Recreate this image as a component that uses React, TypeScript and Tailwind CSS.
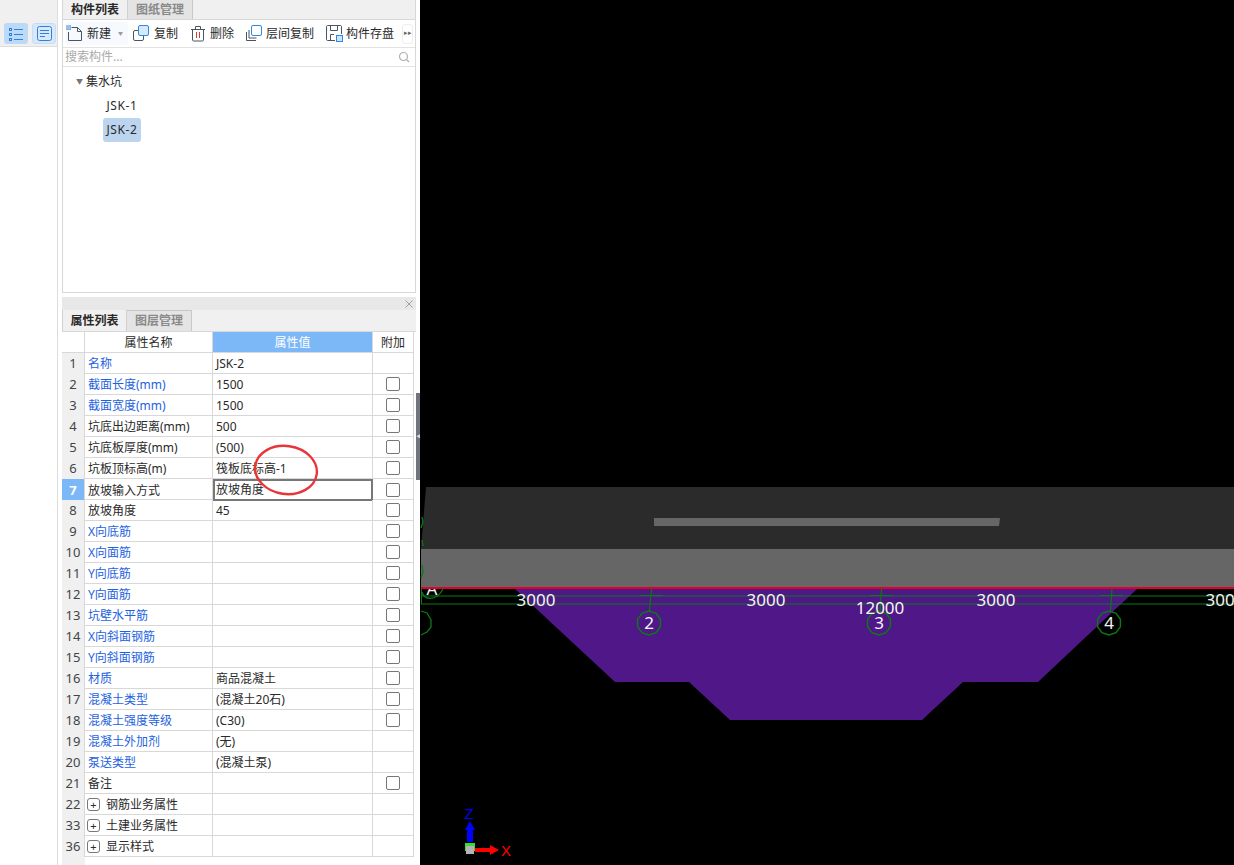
import React from 'react';

type Row = {
  no: number;
  name: string;
  value?: string;
  blue?: boolean;
  check?: boolean;
  group?: boolean;
  active?: boolean;
};

const rows: Row[] = [
  { no: 1, name: '名称', value: 'JSK-2', blue: true },
  { no: 2, name: '截面长度(mm)', value: '1500', blue: true, check: true },
  { no: 3, name: '截面宽度(mm)', value: '1500', blue: true, check: true },
  { no: 4, name: '坑底出边距离(mm)', value: '500', check: true },
  { no: 5, name: '坑底板厚度(mm)', value: '(500)', check: true },
  { no: 6, name: '坑板顶标高(m)', value: '筏板底标高-1', check: true },
  { no: 7, name: '放坡输入方式', value: '放坡角度', check: true, active: true },
  { no: 8, name: '放坡角度', value: '45', check: true },
  { no: 9, name: 'X向底筋', blue: true, check: true },
  { no: 10, name: 'X向面筋', blue: true, check: true },
  { no: 11, name: 'Y向底筋', blue: true, check: true },
  { no: 12, name: 'Y向面筋', blue: true, check: true },
  { no: 13, name: '坑壁水平筋', blue: true, check: true },
  { no: 14, name: 'X向斜面钢筋', blue: true, check: true },
  { no: 15, name: 'Y向斜面钢筋', blue: true, check: true },
  { no: 16, name: '材质', value: '商品混凝土', blue: true, check: true },
  { no: 17, name: '混凝土类型', value: '(混凝土20石)', blue: true, check: true },
  { no: 18, name: '混凝土强度等级', value: '(C30)', blue: true, check: true },
  { no: 19, name: '混凝土外加剂', value: '(无)', blue: true },
  { no: 20, name: '泵送类型', value: '(混凝土泵)', blue: true },
  { no: 21, name: '备注', check: true },
  { no: 22, name: '钢筋业务属性', group: true },
  { no: 33, name: '土建业务属性', group: true },
  { no: 36, name: '显示样式', group: true },
];

const NewIcon = () => (
  <svg width="17" height="17" viewBox="0 0 17 17" fill="none">
    <path d="M5.5 2.5H11.5L15.5 6.5V15.5H2.5V7" stroke="#4a5563" />
    <path d="M11.5 2.5V6.5H15.5" stroke="#4a5563" />
    <rect x="0" y="0" width="5" height="5" fill="#6a9fe6" />
    <path d="M1 0V5M3 0V5M0 1H5M0 3H5" stroke="#cfe0f6" strokeWidth="0.6" />
  </svg>
);

const CopyIcon = () => (
  <svg width="17" height="17" viewBox="0 0 17 17" fill="none">
    <rect x="0.5" y="5.5" width="10" height="10" rx="1.5" stroke="#4a5563" fill="#fff" />
    <rect x="5.5" y="0.5" width="10" height="10" rx="1.5" stroke="#2f88e8" fill="#d6e9fb" />
  </svg>
);

const TrashIcon = () => (
  <svg width="16" height="17" viewBox="0 0 16 17" fill="none">
    <path d="M1 4.5H15M5.5 4.5V1.5H10.5V4.5" stroke="#4a5563" />
    <path d="M2.5 4.5V15C2.5 15.5 3 16 3.5 16H12.5C13 16 13.5 15.5 13.5 15V4.5" stroke="#4a5563" />
    <path d="M6.5 7V13M9.5 7V13" stroke="#e0392f" />
  </svg>
);

const FloorCopyIcon = () => (
  <svg width="17" height="17" viewBox="0 0 17 17" fill="none">
    <path d="M0.5 7V15.5H10" stroke="#4a5563" />
    <path d="M3 5V13H10.5" stroke="#4a5563" />
    <rect x="5.5" y="0.5" width="10" height="10" rx="1.5" stroke="#2f88e8" fill="#fff" />
  </svg>
);

const SaveIcon = () => (
  <svg width="17" height="17" viewBox="0 0 17 17" fill="none">
    <path d="M9 15.5H1.5C1 15.5 0.5 15 0.5 14.5V1.5C0.5 1 1 0.5 1.5 0.5H14.5C15 0.5 15.5 1 15.5 1.5V9" stroke="#4a5563" />
    <path d="M4.5 0.5V5.5H11.5V0.5M4.5 15V9.5H8" stroke="#4a5563" />
    <rect x="10.5" y="10.5" width="6" height="6" fill="#cfe4fa" stroke="#2f88e8" />
  </svg>
);

const ToolButton = ({ icon, label, gap = 'gap-1' }: { icon: React.ReactNode; label: string; gap?: string }) => (
  <div className={`flex shrink-0 items-center whitespace-nowrap ${gap} text-[12px] text-[#2a2a2a]`}>
    {icon}
    <span className="pt-px">{label}</span>
  </div>
);

const Octagon = ({ cx, cy, r = 12 }: { cx: number; cy: number; r?: number }) => {
  const pts = Array.from({ length: 10 }, (_, i) => {
    const a = (Math.PI * 2 * i) / 10 + Math.PI / 2;
    return `${cx + r * Math.cos(a)},${cy + r * Math.sin(a)}`;
  }).join(' ');
  return <polygon points={pts} fill="none" stroke="#0a7a14" strokeWidth="1.4" />;
};

const Viewport = () => (
  <svg width="814" height="865" viewBox="420 0 814 865" className="block">
    <polygon points="515,589 1137,589 1038,682 963,682 922,720 730,720 689,682 615,682" fill="#4f1787" />
    <polygon points="426,487 1234,487 1234,549 421,549" fill="#2b2b2b" />
    <polygon points="654,518 1000,518 999,526 654,526" fill="#666666" />
    <rect x="421" y="549" width="813" height="38" fill="#666666" />
    <rect x="421" y="587" width="813" height="2" fill="#e0002a" />

    <clipPath id="axis-a">
      <rect x="421" y="589" width="30" height="20" />
    </clipPath>
    <text x="432" y="595" fill="#f4f4f4" fontFamily='"Noto Sans", sans-serif' fontSize="17" textAnchor="middle" clipPath="url(#axis-a)">A</text>

    <path d="M421 596H1234M421 604H1234" stroke="#0a7a14" strokeWidth="1.2" />
    <path d="M651.5 589L649.5 611M881.5 589L880 611M1112 589L1110.5 611" stroke="#0a7a14" strokeWidth="1.2" />
    <path d="M640 595.5H663M870 595.5H893M1100 595.5H1123" stroke="#0a7a14" strokeWidth="1" />
    <path d="M421.5 589V604" stroke="#0a7a14" strokeWidth="1" />
    <path d="M422 592C424 600 436 602 443 589" fill="none" stroke="#0a7a14" strokeWidth="1.3" />
    <path d="M421 611L427 613L431 620L431 627L427 632L421 635" fill="none" stroke="#0a7a14" strokeWidth="1.3" />
    <path d="M422 517L423 522L421 528M422 540L423 546M422 565L423 572L421 578" fill="none" stroke="#0a7a14" strokeWidth="1.3" />
    <Octagon cx={649} cy={623} />
    <Octagon cx={879} cy={623} />
    <Octagon cx={1109} cy={623} />

    <g fill="#f4f4f4" fontFamily='"Noto Sans", sans-serif' fontSize="17" textAnchor="middle">
      <text x="536" y="606">3000</text>
      <text x="766" y="606">3000</text>
      <text x="996" y="606">3000</text>
      <text x="1225" y="606">3000</text>
      <text x="880" y="614">12000</text>
      <text x="649" y="629">2</text>
      <text x="879" y="629">3</text>
      <text x="1109" y="629">4</text>
      <text x="417" y="629">1</text>
    </g>

    <rect x="465" y="843" width="10" height="8" fill="#33dd33" />
    <rect x="466" y="846" width="8" height="8" fill="#b4b4b4" />
    <path d="M467 842V830H465L470 821L475 830H473V842Z" fill="#0000ff" />
    <path d="M475 848H490V845L499 850L490 855V852H475Z" fill="#ff0000" />
    <text x="469" y="819" fill="#0000ff" fontFamily='"Liberation Sans", sans-serif' fontSize="15" textAnchor="middle">Z</text>
    <text x="506" y="856" fill="#ff0000" fontFamily='"Liberation Sans", sans-serif' fontSize="15" textAnchor="middle">X</text>
  </svg>
);

export default function App() {
  return (
    <div className='flex h-[865px] w-[1234px] overflow-hidden bg-white text-[12px] text-[#2a2a2a] font-["Noto_Sans","Noto_Sans_CJK_SC",sans-serif]'>
      {/* left icon strip */}
      <div className="w-[58px] shrink-0 border-r border-[#ddd]">
        <div className="flex h-[47px] gap-1 border-b border-[#ddd] bg-[#f0f0f0] pl-1 pt-[23px]">
          <div className="flex h-[21px] w-6 items-center justify-center rounded-[3px] bg-[#bcd9f5]">
            <svg width="16" height="14" viewBox="0 0 16 14" fill="none" stroke="#2f7fe0">
              <path d="M6 2.5H15M6 7.5H15M6 12.5H15" />
              <rect x="1.5" y="1.5" width="2" height="2" />
              <rect x="1.5" y="6.5" width="2" height="2" />
              <rect x="1.5" y="11.5" width="2" height="2" />
            </svg>
          </div>
          <div className="flex h-[21px] w-6 items-center justify-center rounded-[3px] border border-[#c6def5] bg-[#d6e8f9]">
            <svg width="15" height="15" viewBox="0 0 15 15" fill="none" stroke="#2f7fe0">
              <rect x="0.5" y="0.5" width="14" height="14" rx="2" />
              <path d="M3 4.5H12M3 7.5H12M3 10.5H8" />
            </svg>
          </div>
        </div>
      </div>

      {/* component and property panels */}
      <div className="ml-1 flex w-[354px] shrink-0 flex-col">
        <div className="flex h-[293px] flex-col border border-t-0 border-[#d8d8d8]">
          <div className="flex h-5 border-b border-[#d8d8d8] bg-[#f0f0f0]">
            <div className="flex w-[65px] items-center justify-center border-r border-[#d0d0d0] font-bold">构件列表</div>
            <div className="flex w-[65px] items-center justify-center border-r border-[#c8c8c8] bg-[#e4e4e4] font-bold text-[#8a8a8a]">图纸管理</div>
          </div>
          <div className="flex h-[28px] items-center border-b border-[#e2e2e2] pl-[3px]">
            <div className="flex h-[23px] w-[62px] shrink-0 items-center rounded-[3px] bg-[#f6faff]">
              <ToolButton icon={<NewIcon />} label="新建" gap="gap-[4px]" />
              <span className="ml-[7px] text-[5px] text-[#999]">▼</span>
            </div>
            <div className="ml-[5px]"><ToolButton icon={<CopyIcon />} label="复制" /></div>
            <div className="ml-3"><ToolButton icon={<TrashIcon />} label="删除" /></div>
            <div className="ml-3"><ToolButton icon={<FloorCopyIcon />} label="层间复制" gap="gap-[3px]" /></div>
            <div className="ml-3"><ToolButton icon={<SaveIcon />} label="构件存盘" gap="gap-[3px]" /></div>
            <div className="ml-[8px] flex h-[20px] w-[11px] shrink-0 items-center justify-center rounded-[3px] border border-[#eee] text-[7px] text-[#666]">▸▸</div>
          </div>
          <div className="flex h-[19px] items-center justify-between border-b border-[#e2e2e2] pl-[2px] pr-[5px] text-[#aaa]">
            <span>搜索构件...</span>
            <svg width="12" height="12" viewBox="0 0 12 12" fill="none" stroke="#b0b0b0" strokeWidth="1.2">
              <circle cx="5.5" cy="5.5" r="4" />
              <path d="M8.5 8.5L11 11" />
            </svg>
          </div>
          <div className="flex flex-col pl-[13px] pt-[3px]">
            <div className="flex h-6 items-center gap-[3px]">
              <span className="text-[7px] text-[#777]">▼</span>
              <span>集水坑</span>
            </div>
            <div className="ml-[27px] flex h-6 w-[38px] items-center justify-center tracking-[0.6px]">JSK-1</div>
            <div className="ml-[27px] flex h-6 w-[38px] items-center justify-center rounded-[3px] bg-[#bcd5ef] tracking-[0.6px]">JSK-2</div>
          </div>
        </div>

        <div className="relative mt-1 flex flex-1 flex-col">
          <div className="flex h-[13px] items-center justify-end bg-[#e8e8e8] pr-[3px]">
            <svg width="8" height="8" viewBox="0 0 8 8" stroke="#a0a0a0"><path d="M0.5 0.5L7.5 7.5M7.5 0.5L0.5 7.5" /></svg>
          </div>
          <div className="flex h-[22px] border-b border-[#d8d8d8] bg-[#f0f0f0]">
            <div className="flex w-[65px] items-center justify-center border-x border-[#d0d0d0] font-bold">属性列表</div>
            <div className="flex w-[65px] items-center justify-center border-r border-t border-[#c8c8c8] bg-[#e4e4e4] font-bold text-[#8a8a8a]">图层管理</div>
          </div>

          <div className="w-[352px] border-r border-[#d8d8d8]">
            <div className="grid h-[21px] grid-cols-[23px_128px_160px_1fr] border-b border-[#d8d8d8]">
              <div className="border-r border-[#d8d8d8]" />
              <div className="flex items-center justify-center border-r border-[#d8d8d8] pt-px">属性名称</div>
              <div className="flex items-center justify-center border-r border-[#d8d8d8] bg-[#7cb8f8] pt-px text-white">属性值</div>
              <div className="flex items-center justify-center pt-px">附加</div>
            </div>
            {rows.map((r) => (
              <div key={r.no} className="grid h-[21px] grid-cols-[23px_128px_160px_1fr] border-b border-[#d8d8d8]">
                <div className={r.active
                  ? 'flex items-center justify-center border-r border-[#d8d8d8] bg-[#7cb8f8] pt-px text-[13px] font-bold text-white'
                  : 'flex items-center justify-center border-r border-[#d8d8d8] bg-[#f0f0f0] pt-px text-[13px] text-[#444]'}>
                  {r.no}
                </div>
                <div className={`flex items-center border-r border-[#d8d8d8] pt-px ${r.group ? 'pl-[2px]' : 'pl-[3px]'} ${r.blue ? 'text-[#1d62e0]' : 'text-[#2a2a2a]'}`}>
                  {r.group && (
                    <span className="mr-[6px] flex h-[13px] w-[13px] items-center justify-center rounded-[3px] border border-[#777] text-[11px] leading-none">+</span>
                  )}
                  {r.name}
                </div>
                <div className={r.active
                  ? 'flex items-center border-2 border-[#777] pl-[1px]'
                  : 'flex items-center border-r border-[#d8d8d8] pl-[3px] pt-px'}>
                  {r.value}
                </div>
                <div className="flex items-center justify-center">
                  {r.check && <span className="h-[14px] w-[14px] rounded-[2px] border border-[#777] bg-white" />}
                </div>
              </div>
            ))}
          </div>
          <div className="w-[23px] flex-1 bg-[#f0f0f0]" />

          {/* hand-drawn mark on the screenshot */}
          <svg width="70" height="56" viewBox="0 0 70 56" fill="none" className="absolute left-[190px] top-[146px]">
            <ellipse cx="34" cy="27" rx="31" ry="24" stroke="#e8353a" strokeWidth="2.4" transform="rotate(8 34 27)" />
          </svg>
        </div>
      </div>

      {/* splitter */}
      <div className="flex w-1 shrink-0 flex-col">
        <div className="mt-[393px] flex h-[87px] items-center bg-[#70757d]">
          <span className="text-[6px] text-[#ddd]">◀</span>
        </div>
      </div>

      {/* 3d viewport */}
      <div className="flex-1 bg-black">
        <Viewport />
      </div>
    </div>
  );
}
